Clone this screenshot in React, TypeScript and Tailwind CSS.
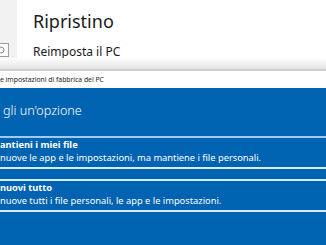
import React from "react";

const font = { fontFamily: '"Segoe UI", "Noto Sans", sans-serif' };

function SearchStub() {
  // only the right edge of the search box is visible in the crop
  return (
    <div className="w-[9px] h-[14px] bg-white border border-l-0 border-[#a0a0a0]">
      <svg width="8" height="12" viewBox="0 0 8 12">
        <circle cx="1" cy="6" r="3" fill="none" stroke="#8a8a8a" strokeWidth="1" />
      </svg>
    </div>
  );
}

function Option({ title, desc, top }: { title: string; desc: string; top: string }) {
  return (
    <div className={`h-[33px] border-t-2 border-b-2 border-b-[#d3eef9] pt-[1px] ${top}`}>
      <p className="text-[9.3px] leading-[12px] font-bold">{title}</p>
      <p className="text-[9.3px] leading-[13px]">{desc}</p>
    </div>
  );
}

export default function App() {
  return (
    <div className="w-[326px] h-[245px] overflow-hidden bg-white flex flex-col text-[#1a1a1a]" style={font}>
      <div className="flex h-[58px] shrink-0">
        <div className="w-[17px] bg-[#f2f2f2] pt-[43px]">
          <SearchStub />
        </div>
        <div className="pl-[16px] pt-[12px]">
          <h1 className="text-[18px] leading-none">Ripristino</h1>
          <p className="mt-[16px] text-[12px] leading-none">Reimposta il PC</p>
        </div>
      </div>
      <div className="h-[11px] shrink-0 bg-linear-to-b from-white to-[#e3e3e3]" />
      <div className="h-[2px] shrink-0 bg-[#cfcfcf]" />
      <div className="h-[17px] shrink-0 bg-white text-[6.8px] leading-[17px] text-[#222]">
        e impostazioni di fabbrica del PC
      </div>
      <div className="flex-1 bg-[#0063b1] text-white pt-[15px]">
        <h2 className="text-[12.6px] leading-[16px] font-light pl-[3px]">gli un'opzione</h2>
        <div className="mt-[17px] flex flex-col gap-[10px]">
          <Option
            top="border-t-[#9ccbee]"
            title="antieni i miei file"
            desc="nuove le app e le impostazioni, ma mantiene i file personali."
          />
          <Option
            top="border-t-[#d3eef9]"
            title="nuovi tutto"
            desc="nuove tutti i file personali, le app e le impostazioni."
          />
        </div>
      </div>
    </div>
  );
}
